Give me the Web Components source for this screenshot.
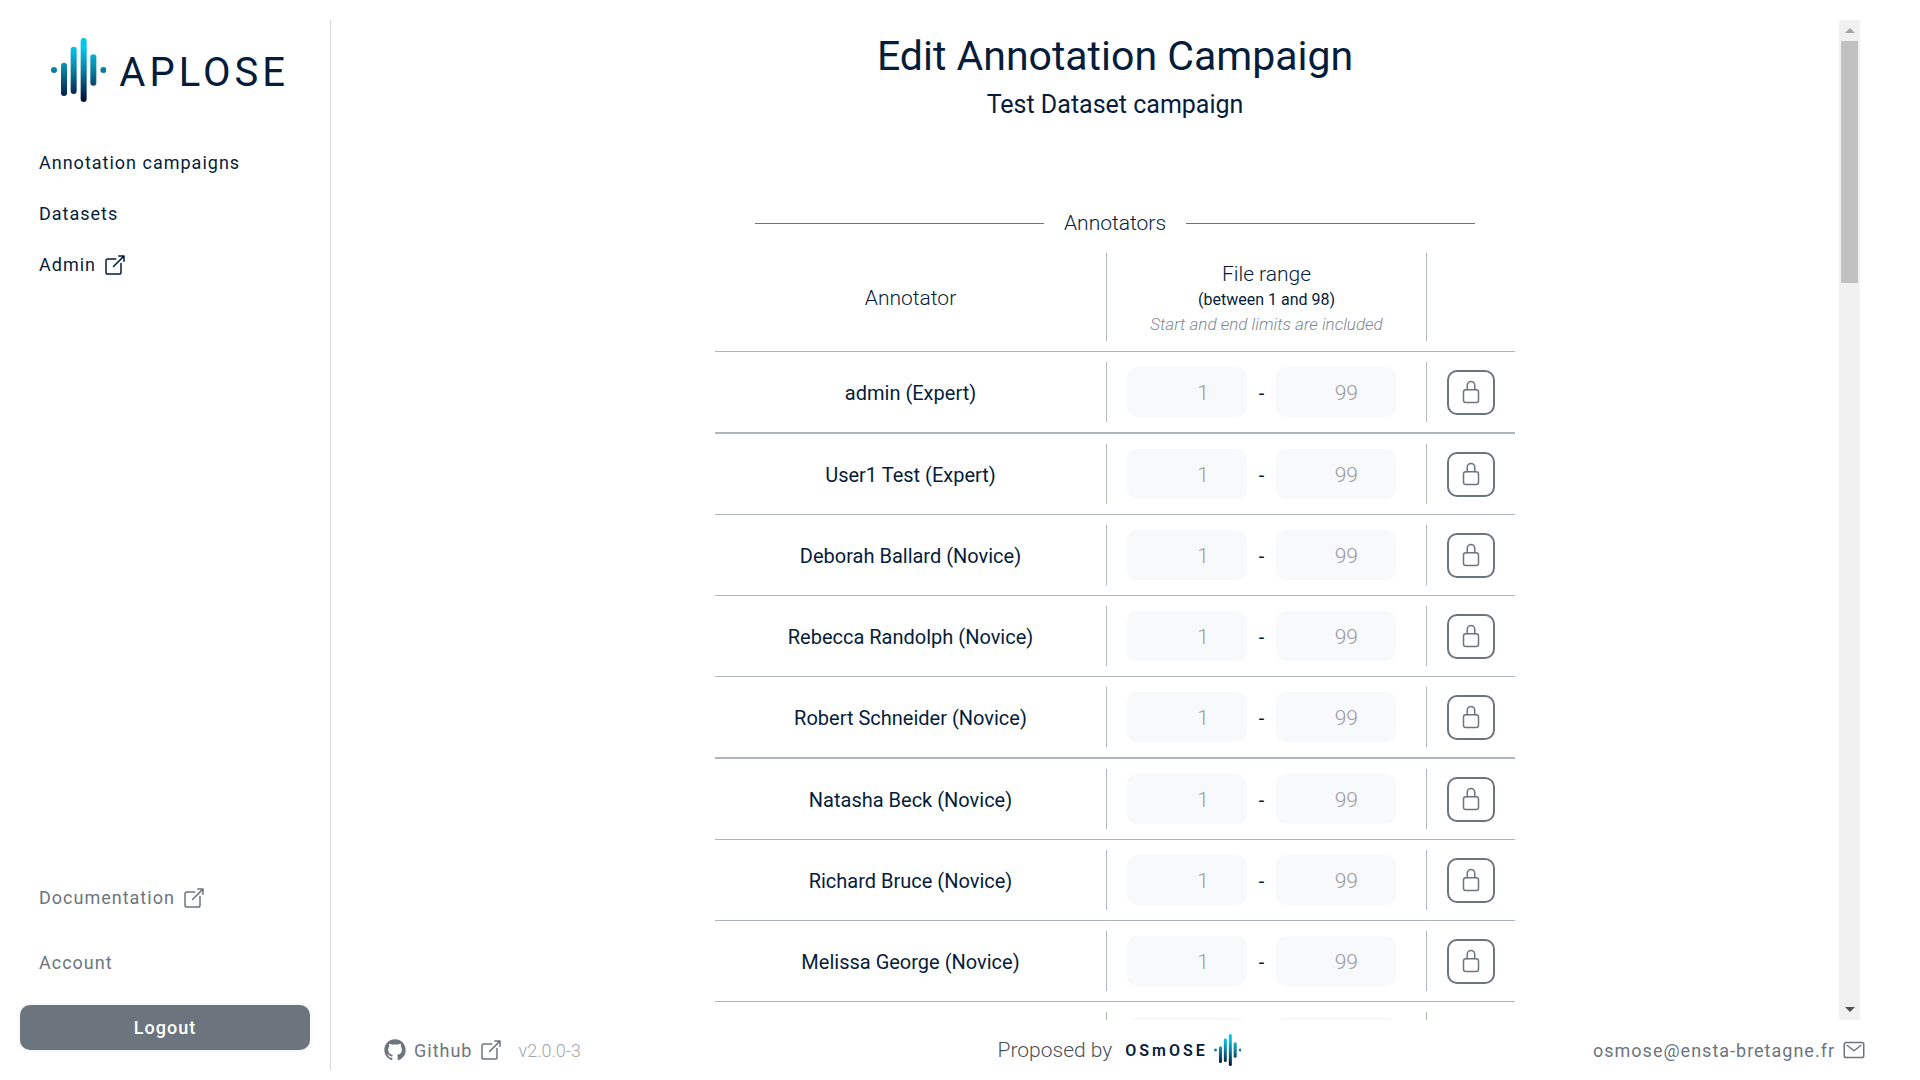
<!DOCTYPE html>
<html lang="en">
<head>
<meta charset="utf-8">
<title>APLOSE</title>
<style>
  :root {
    --ink: #051d3b;
    --grey: #6c757d;
    --line: #adb5bd;
  }
  body {
    margin: 0;
    background: #fff;
    color: var(--ink);
    font: 400 20px/25px Roboto, "Liberation Sans", sans-serif;
  }
</style>
</head>
<body>
<aplose-app></aplose-app>
<script>
const define = (name, html, setup) => {
  const template = document.createElement('template');
  template.innerHTML = html;
  customElements.define(name, class extends HTMLElement {
    constructor() {
      super();
      this.attachShadow({ mode: 'open' }).append(template.content.cloneNode(true));
    }
    connectedCallback() {
      if (setup) setup(this, this.shadowRoot);
    }
  });
};

const icons = {
  open: '<svg viewBox="0 0 512 512"><path d="M384 224v184a40 40 0 0 1-40 40H104a40 40 0 0 1-40-40V168a40 40 0 0 1 40-40h167.5M336 64h112v112M224 288 440 72"/></svg>',
  lock: '<svg viewBox="0 0 512 512"><path d="M336 208v-95a80 80 0 0 0-160 0v95"/><rect x="96" y="208" width="320" height="272" rx="48"/></svg>',
  mail: '<svg viewBox="0 0 512 512"><rect x="48" y="96" width="416" height="320" rx="40"/><path d="m112 160 144 112 144-112"/></svg>',
  github: '<svg viewBox="-1 -1 18 18"><path style="fill:currentColor;stroke:none" d="M8 0C3.58 0 0 3.58 0 8c0 3.54 2.29 6.53 5.47 7.59.4.07.55-.17.55-.38 0-.19-.01-.82-.01-1.49-2.01.37-2.53-.49-2.69-.94-.09-.23-.48-.94-.82-1.13-.28-.15-.68-.52-.01-.53.63-.01 1.08.58 1.23.82.72 1.21 1.87.87 2.33.66.07-.52.28-.87.51-1.07-1.78-.2-3.64-.89-3.64-3.95 0-.87.31-1.59.82-2.15-.08-.2-.36-1.02.08-2.12 0 0 .67-.21 2.2.82.64-.18 1.32-.27 2-.27s1.36.09 2 .27c1.53-1.04 2.2-.82 2.2-.82.44 1.1.16 1.92.08 2.12.51.56.82 1.27.82 2.15 0 3.07-1.87 3.75-3.65 3.95.29.25.54.73.54 1.48 0 1.07-.01 1.93-.01 2.2 0 .21.15.46.55.38A8.01 8.01 0 0 0 16 8c0-4.42-3.58-8-8-8z"/></svg>'
};

define('ui-icon', `
  <style>
    :host { display: block; flex: none; width: 24px; height: 24px; }
    svg { display: block; width: 100%; height: 100%; fill: none; stroke: currentColor;
      stroke-width: 32; stroke-linecap: round; stroke-linejoin: round; }
  </style>`, (host, root) => {
  root.innerHTML += icons[host.getAttribute('name')];
});

define('wave-mark', `
  <style>
    :host { display: block; flex: none; }
    svg { display: block; height: 100%; }
  </style>
  <svg viewBox="0 0 166 192">
    <defs><linearGradient id="g" gradientUnits="userSpaceOnUse" x1="0" y1="0" x2="0" y2="192">
      <stop offset=".15" stop-color="#00c8eb"/><stop offset=".5" stop-color="#0a7fa0"/><stop offset=".95" stop-color="#04143a"/>
    </linearGradient></defs>
    <g fill="url(#g)">
      <circle cx="9" cy="96" r="9"/>
      <rect x="30" y="74" width="18" height="100" rx="9"/>
      <rect x="59" y="26" width="18" height="142" rx="9"/>
      <rect x="89" y="0" width="18" height="192" rx="9"/>
      <rect x="118" y="49" width="18" height="94" rx="9"/>
      <circle cx="157" cy="96" r="9"/>
    </g>
  </svg>`);

define('nav-link', `
  <style>
    :host { display: flex; font-size: 18px; letter-spacing: 1px; }
    a { display: flex; align-items: center; gap: 7px; color: inherit; text-decoration: none; }
  </style>
  <a href="#"><slot></slot></a>`);

define('app-sidebar', `
  <style>
    :host { display: flex; flex-direction: column; box-sizing: border-box; flex: none; width: 311px;
      padding-right: 20px; border-right: 1px solid #d5d8db; }
    .brand { display: flex; align-items: center; gap: 13px; padding: 18px 31px 0; font-size: 40px;
      line-height: 50px; letter-spacing: 4px; }
    .brand span { padding-top: 6px; }
    wave-mark { height: 64px; }
    nav { display: flex; flex-direction: column; gap: 26px; padding: 48px 19px 0; }
    .foot { gap: 40px; margin-top: auto; padding: 0 19px; color: var(--grey); }
    button { margin: 30px 0 20px; height: 45px; border: 0; border-radius: 10px; background: var(--grey);
      color: #fff; font: 500 18px/25px Roboto, sans-serif; letter-spacing: 1px;
      box-shadow: 0 0 6px rgba(0, 0, 0, .08); }
  </style>
  <div class="brand"><wave-mark></wave-mark><span>APLOSE</span></div>
  <nav>
    <nav-link>Annotation campaigns</nav-link>
    <nav-link>Datasets</nav-link>
    <nav-link>Admin<ui-icon name="open"></ui-icon></nav-link>
  </nav>
  <nav class="foot">
    <nav-link>Documentation<ui-icon name="open"></ui-icon></nav-link>
    <nav-link>Account</nav-link>
  </nav>
  <button type="button">Logout</button>`);

const people = ['admin (Expert)', 'User1 Test (Expert)', 'Deborah Ballard (Novice)', 'Rebecca Randolph (Novice)',
  'Robert Schneider (Novice)', 'Natasha Beck (Novice)', 'Richard Bruce (Novice)', 'Melissa George (Novice)'];

const row = (name, first, dash, last) => `
  <tr>
    <td><div class="cell rule label">${name}</div></td>
    <td><div class="cell rule fields">
      <input type="number" value="${first}" disabled aria-label="First file"><span>${dash}</span><input type="number" value="${last}" disabled aria-label="Last file">
    </div></td>
    <td><div class="cell"><button type="button" aria-label="Unlock"><ui-icon name="lock"></ui-icon></button></div></td>
  </tr>`;

define('annotator-table', `
  <style>
    :host { display: block; width: 800px; }
    table { width: 100%; table-layout: fixed; border-collapse: separate; border-spacing: 0; }
    .name { width: 392px; }
    .range { width: 320px; }
    th, td { padding: 10px 0; font-weight: inherit; border-bottom: 1px solid var(--line); }
    tbody tr:nth-child(4n + 1) td { border-bottom-width: 2px; }
    th { font-weight: 300; font-size: 21px; }
    .cell { display: flex; align-items: center; justify-content: center; box-sizing: border-box; height: 60px; }
    th .cell { flex-direction: column; height: 88px; }
    .label { padding-top: 2px; }
    .limits { padding-top: 4px; }
    .rule { border-right: 1px solid var(--line); }
    .fields { justify-content: flex-start; padding-left: 20px; }
    .fields span { width: 29px; padding-top: 2px; text-align: center; }
    small { font-size: 16px; line-height: 25px; font-weight: 400; }
    small + small { font-size: 17px; line-height: 24px; font-style: italic; font-weight: 300; color: #7d8894; }
    input { box-sizing: border-box; width: 120px; height: 50px; margin: 0; padding: 2px 38px 0 20px; border: 0;
      border-radius: 10px; background: #f8f9fa; color: #9a9a9a; font: inherit; font-size: 21px; font-weight: 300; text-align: right;
      appearance: textfield; -moz-appearance: textfield; }
    input::-webkit-inner-spin-button { appearance: none; margin: 0; }
    button { display: flex; align-items: center; justify-content: center; width: 48px; height: 45px; padding: 0;
      border: 2px solid var(--grey); border-radius: 10px; background: #fff; color: var(--grey); }
  </style>
  <table>
    <colgroup><col class="name"><col class="range"><col></colgroup>
    <thead><tr>
      <th><div class="cell rule label">Annotator</div></th>
      <th><div class="cell rule limits">File range<small>(between 1 and 98)</small><small>Start and end limits are included</small></div></th>
      <th></th>
    </tr></thead>
    <tbody></tbody>
  </table>`, (host, root) => {
  root.querySelector('tbody').innerHTML = people.map(name => row(name, 1, '-', 99)).join('') + row('', '', '', '');
});

define('section-title', `
  <style>
    :host { display: flex; align-items: center; gap: 20px; width: 720px; font-size: 21px; font-weight: 300; }
    :host::before, :host::after { content: ""; flex: 1; border-top: 1px solid var(--grey); }
  </style>
  <slot></slot>`);

define('campaign-page', `
  <style>
    :host { display: flex; flex-direction: column; align-items: center; min-width: 0; overflow: hidden; }
    h1, h2 { margin: 0; font-weight: 400; }
    h1 { padding-top: 11px; font-size: 41px; line-height: 50px; }
    h2 { padding-top: 9px; font-size: 25px; line-height: 30px; }
    section-title { padding: 91px 0 7px; }
    annotator-table { flex: none; }
  </style>
  <h1>Edit Annotation Campaign</h1>
  <h2>Test Dataset campaign</h2>
  <section-title>Annotators</section-title>
  <annotator-table></annotator-table>`);

define('scroll-rail', `
  <style>
    :host { display: flex; flex-direction: column; align-items: center; flex: none; width: 21px; background: #f1f1f1; }
    .end { display: flex; align-items: center; height: 21px; }
    .end::before { content: ""; border: 5px solid transparent; border-top-width: 0; border-bottom-color: #a3a3a3; }
    .down::before { border-width: 5px 5px 0; border-color: #505050 transparent; }
    .thumb { width: 17px; height: 24.2%; background: #c1c1c1; }
    .down { margin-top: auto; }
  </style>
  <div class="end"></div><div class="thumb"></div><div class="end down"></div>`);

define('app-footer', `
  <style>
    :host { display: grid; grid-template-columns: 1fr auto 1fr; align-items: center; height: 60px;
      padding: 0 34px 0 42px; color: var(--grey); }
    div { display: flex; align-items: center; }
    .left { gap: 15px; padding-left: 10px; }
    .version { font-size: 18px; font-weight: 300; color: #a0a7ae; }
    .by { gap: 13px; font-size: 21px; font-weight: 300; color: #495057; }
    .logo { gap: 6px; color: var(--ink); font-size: 16px; font-weight: 600; letter-spacing: 3px; }
    wave-mark { height: 32px; }
    .right { justify-content: flex-end; }
  </style>
  <div class="left">
    <nav-link><ui-icon name="github"></ui-icon>Github<ui-icon name="open"></ui-icon></nav-link>
    <span class="version">v2.0.0-3</span>
  </div>
  <div class="by"><span>Proposed by</span><div class="logo"><span>OSmOSE</span><wave-mark></wave-mark></div></div>
  <div class="right"><nav-link>osmose@ensta-bretagne.fr<ui-icon name="mail"></ui-icon></nav-link></div>`);

define('aplose-app', `
  <style>
    :host { display: flex; box-sizing: border-box; height: 100vh; padding: 20px 20px 0; }
    app-sidebar { margin-bottom: 10px; }
    main { display: flex; flex-direction: column; flex: 1; min-width: 0; }
    .view { display: flex; flex: 1; min-height: 0; padding: 0 40px 0 60px; }
    campaign-page { flex: 1; }
  </style>
  <app-sidebar></app-sidebar>
  <main>
    <div class="view"><campaign-page></campaign-page><scroll-rail></scroll-rail></div>
    <app-footer></app-footer>
  </main>`);
</script>
</body>
</html>
